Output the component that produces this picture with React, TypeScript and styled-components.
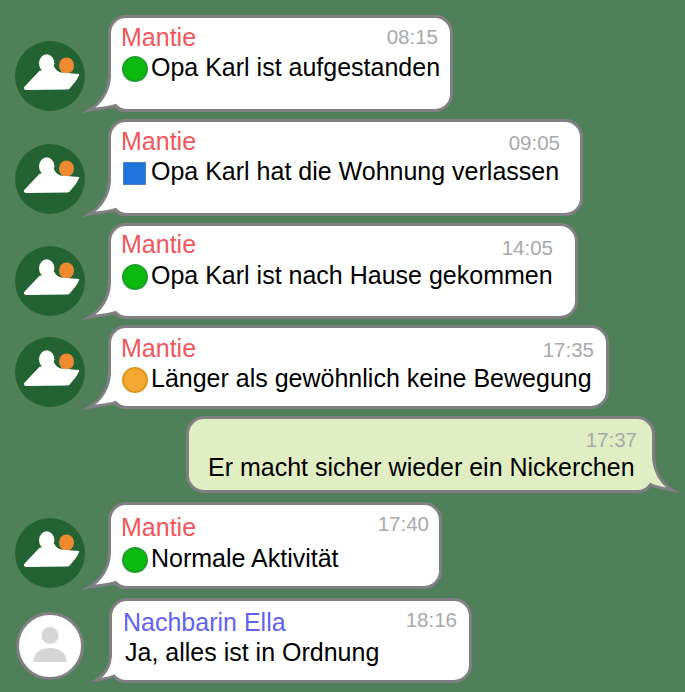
import styled, { createGlobalStyle } from "styled-components";

const GlobalStyle = createGlobalStyle`
  html, body {
    margin: 0;
    padding: 0;
    width: 685px;
    height: 692px;
    overflow: hidden;
    background: #50805a;
    font-family: "Liberation Sans", Arial, sans-serif;
  }
`;

const Chat = styled.div`
  display: flex;
  flex-direction: column;
  width: 685px;
  height: 692px;
  box-sizing: border-box;
  padding: 15px 30px 0 15px;
`;

const Row = styled.div<{ $own?: boolean; $top: number }>`
  display: flex;
  align-items: flex-end;
  justify-content: ${(p) => (p.$own ? "flex-end" : "flex-start")};
  margin-top: ${(p) => p.$top}px;
`;

const AvatarWrap = styled.div<{ $drop: number; $gap: number }>`
  flex: none;
  width: 70px;
  height: 70px;
  margin: 0 ${(p) => p.$gap}px ${(p) => p.$drop}px 0;
`;

const Bubble = styled.div<{ $own?: boolean; $width: number; $height: number }>`
  position: relative;
  box-sizing: border-box;
  width: ${(p) => p.$width}px;
  height: ${(p) => p.$height}px;
  padding: ${(p) => (p.$own ? "5px 15px 0 19px" : "5px 10px 0 11px")};
  border: 3px solid #807f83;
  border-radius: 18px;
  background: ${(p) => (p.$own ? "#e1eec4" : "#ffffff")};
`;

const Tail = styled.svg<{ $own?: boolean }>`
  position: absolute;
  bottom: -3px;
  ${(p) => (p.$own ? "right: -31px; transform: scaleX(-1);" : "left: -31px;")}
  width: 50px;
  height: 50px;
  overflow: visible;
`;

const Header = styled.div`
  display: flex;
  align-items: flex-start;
`;

const Name = styled.span<{ $color: string; $shift: number; $top: number }>`
  color: ${(p) => p.$color};
  font-size: 25px;
  line-height: 28px;
  margin: ${(p) => p.$top}px 0 ${(p) => -p.$top}px ${(p) => p.$shift}px;
`;

const Time = styled.span<{ $top: number; $right: number }>`
  margin: ${(p) => p.$top}px ${(p) => p.$right}px 0 auto;
  color: #a9a9ad;
  font-size: 20.5px;
  line-height: 24px;
`;

const Line = styled.div<{ $top: number; $shift: number }>`
  display: flex;
  align-items: center;
  height: 30px;
  margin-top: ${(p) => p.$top}px;
  margin-left: ${(p) => p.$shift}px;
  color: #000000;
  font-size: 25px;
  white-space: nowrap;
`;

const Dot = styled.span<{ $fill: string; $edge: string }>`
  flex: none;
  box-sizing: border-box;
  width: 26px;
  height: 26px;
  margin: 4px 3px 0 0;
  border: 2px solid ${(p) => p.$edge};
  border-radius: 50%;
  background: ${(p) => p.$fill};
`;

const Square = styled.span`
  flex: none;
  box-sizing: border-box;
  width: 23px;
  height: 23px;
  margin: 4px 5px 0 1px;
  border: 1.5px solid #4f82c0;
  background: #1f74dc;
`;

function MantieAvatar() {
  return (
    <svg width="70" height="70" viewBox="0 0 70 70">
      <circle cx="35" cy="35" r="35" fill="#236232" />
      <ellipse cx="51.5" cy="24.5" rx="7.5" ry="8" fill="#f08a30" />
      <ellipse cx="31.7" cy="22.3" rx="7.7" ry="9" fill="#ffffff" />
      <path
        d="M9.2 46 L24.3 30 L39.5 26 L40.5 28 C43 30.5 45 31.7 48 31.8 L64.3 33 C63.5 37 58 44 55 47 C54.3 48 53.5 48.4 52.5 48.5 L11.7 49 C9 49 8.3 47 9.2 46 Z"
        fill="#ffffff"
      />
    </svg>
  );
}

function NeighbourAvatar() {
  return (
    <svg width="70" height="70" viewBox="0 0 70 70">
      <circle cx="35" cy="35" r="32.5" fill="#ffffff" stroke="#807f83" strokeWidth="3" />
      <circle cx="35" cy="24.5" r="8.5" fill="#d6d6d6" />
      <path d="M18.5 51 C18.5 42 25 37 35 37 C45 37 51.5 42 51.5 51 Z" fill="#d6d6d6" />
    </svg>
  );
}

// tail outlines, x/y in the 50x50 box whose right part sits under the bubble corner
const TAIL_LONG = "M29.5 14 C29 29 21 41 9.5 48 C17 46.5 27 46.5 35.5 43.5 A16.5 16.5 0 0 0 46 48.5";
const TAIL_OWN = "M29.5 14 C29 28 22 40 10.5 47 C18 45.5 26 45 32.5 41.5 A16.5 16.5 0 0 0 46 48.5";
const TAIL_SHORT = "M29.5 22 C29 32 25 41 15.5 46.8 C22 46 28 45.5 33 43 A16.5 16.5 0 0 0 46 48.5";

type Status = "green" | "blue" | "orange";

type Message = {
  name?: string;
  time: string;
  text: string;
  status?: Status;
  top: number;
  width: number;
  height: number;
  nameTop: number;
  timeTop: number;
  timeRight: number;
  textTop: number;
  own?: boolean;
  neighbour?: boolean;
  drop?: number;
};

const messages: Message[] = [
  { name: "Mantie", time: "08:15", text: "Opa Karl ist aufgestanden", status: "green", top: 0, width: 345, height: 97, nameTop: 0, timeTop: 2, timeRight: 2, textTop: 1 },
  { name: "Mantie", time: "09:05", text: "Opa Karl hat die Wohnung verlassen", status: "blue", top: 7, width: 475, height: 97, nameTop: 0, timeTop: 4, timeRight: 10, textTop: 1, drop: 2 },
  { name: "Mantie", time: "14:05", text: "Opa Karl ist nach Hause gekommen", status: "green", top: 7, width: 470, height: 96, nameTop: -1, timeTop: 5, timeRight: 12, textTop: 0, drop: 3 },
  { name: "Mantie", time: "17:35", text: "Länger als gewöhnlich keine Bewegung", status: "orange", top: 6, width: 501, height: 84, nameTop: 1, timeTop: 5, timeRight: 2, textTop: 1, drop: 2 },
  { time: "17:37", text: "Er macht sicher wieder ein Nickerchen", top: 7, width: 469, height: 77, nameTop: 0, timeTop: 4, timeRight: 0, textTop: 0, own: true },
  { name: "Mantie", time: "17:40", text: "Normale Aktivität", status: "green", top: 9, width: 334, height: 87, nameTop: 3, timeTop: 2, timeRight: 0, textTop: 5 },
  { name: "Nachbarin Ella", time: "18:16", text: "Ja, alles ist in Ordnung", top: 9, width: 363, height: 85, nameTop: 2, timeTop: 2, timeRight: 2, textTop: 3, neighbour: true, drop: 2 },
];

function StatusMark({ status }: { status?: Status }) {
  if (status === "green") return <Dot $fill="#0bb90f" $edge="#1f9f2a" />;
  if (status === "orange") return <Dot $fill="#f3a833" $edge="#e0951f" />;
  if (status === "blue") return <Square />;
  return null;
}

function tailPath(m: Message) {
  if (m.own) return TAIL_OWN;
  return m.neighbour ? TAIL_SHORT : TAIL_LONG;
}

export default function App() {
  return (
    <>
      <GlobalStyle />
      <Chat>
        {messages.map((m) => (
          <Row key={m.time} $own={m.own} $top={m.top}>
            {!m.own && (
              <AvatarWrap $drop={m.drop ?? 1} $gap={m.neighbour ? 24 : 23}>
                {m.neighbour ? <NeighbourAvatar /> : <MantieAvatar />}
              </AvatarWrap>
            )}
            <Bubble $own={m.own} $width={m.width} $height={m.height}>
              <Tail $own={m.own} viewBox="0 0 50 50">
                <path
                  d={tailPath(m)}
                  fill={m.own ? "#e1eec4" : "#ffffff"}
                  stroke="#807f83"
                  strokeWidth="3"
                  strokeMiterlimit="8"
                />
              </Tail>
              <Header>
                {m.name && (
                  <Name
                    $color={m.neighbour ? "#6262f0" : "#f2565a"}
                    $shift={m.neighbour ? 0 : -1}
                    $top={m.nameTop}
                  >
                    {m.name}
                  </Name>
                )}
                <Time $top={m.timeTop} $right={m.timeRight}>
                  {m.time}
                </Time>
              </Header>
              <Line $top={m.textTop} $shift={m.neighbour ? 2 : 0}>
                <StatusMark status={m.status} />
                {m.text}
              </Line>
            </Bubble>
          </Row>
        ))}
      </Chat>
    </>
  );
}
